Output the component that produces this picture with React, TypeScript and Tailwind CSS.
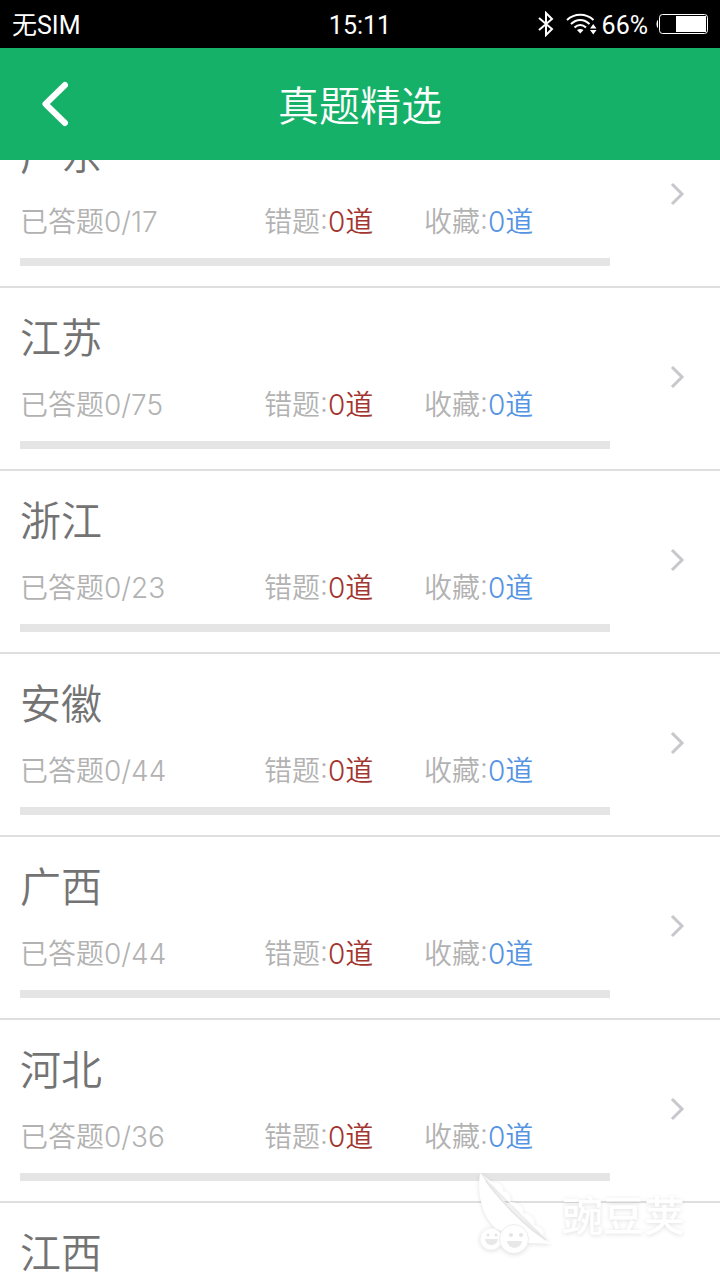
import React from "react";

interface Province {
  name: string;
  answered: number;
  total: number;
  wrong: number;
  saved: number;
}

const provinces: Province[] = [
  { name: "广东", answered: 0, total: 17, wrong: 0, saved: 0 },
  { name: "江苏", answered: 0, total: 75, wrong: 0, saved: 0 },
  { name: "浙江", answered: 0, total: 23, wrong: 0, saved: 0 },
  { name: "安徽", answered: 0, total: 44, wrong: 0, saved: 0 },
  { name: "广西", answered: 0, total: 44, wrong: 0, saved: 0 },
  { name: "河北", answered: 0, total: 36, wrong: 0, saved: 0 },
  { name: "江西", answered: 0, total: 40, wrong: 0, saved: 0 },
];

const StatusBar: React.FC = () => (
  <div className="grid h-12 shrink-0 grid-cols-3 items-center bg-black px-3 pt-1 font-[Roboto,'Noto_Sans_CJK_SC',sans-serif] text-[25px] leading-10 text-white">
    <span>无SIM</span>
    <span className="text-center">15:11</span>
    <div className="flex items-center justify-end">
      {/* Bluetooth */}
      <svg className="mr-3 mb-1 h-[26px] w-4" viewBox="0 0 16 26" fill="none" stroke="currentColor" strokeWidth="2">
        <path d="M1 7 14 18 8 24V2L14 8 1 19" />
      </svg>
      {/* Wifi */}
      <svg className="mr-1 mb-1 h-6 w-8" viewBox="0 0 32 24" fill="none" stroke="currentColor" strokeWidth="2">
        <path d="M1 8C8.500 1 20 1 27.500 8" />
        <path d="M5 12C10.500 6.500 18 6.500 23.500 12" />
        <path d="M8.500 15.500C12 12 16.500 12 20 15.500" />
        <path d="M11 18C13 16.500 15.500 16.500 17.500 18L14.250 21.500Z" fill="currentColor" stroke="none" />
        <path d="M24 16.500 27.250 12 30.500 16.500ZM24 18 27.250 22.500 30.500 18Z" fill="currentColor" stroke="none" />
      </svg>
      <span>66%</span>
      {/* Battery */}
      <svg className="mb-1 ml-2 h-5 w-[52px]" viewBox="0 0 52 20" fill="none">
        <path d="M2 6C0 7 0 13 2 14Z" fill="currentColor" />
        <rect x="3.500" y="0.500" width="48" height="19" rx="3" stroke="currentColor" />
        <rect x="20" y="2" width="30" height="16" fill="currentColor" />
      </svg>
    </div>
  </div>
);

const Header: React.FC = () => (
  <header className="grid h-28 shrink-0 grid-cols-[112px_1fr_112px] items-center bg-[#16b168] text-white">
    <button type="button" aria-label="返回" className="flex h-full items-center justify-center">
      <svg className="h-12 w-8" viewBox="0 0 32 48" fill="none" stroke="currentColor" strokeWidth="6" strokeLinecap="round" strokeLinejoin="round">
        <path d="M25 5 5.500 24 25 43" />
      </svg>
    </button>
    <h1 className="pt-1 text-center text-[41px] leading-[58px] font-[350]">真题精选</h1>
  </header>
);

const ProvinceRow: React.FC<{ item: Province }> = ({ item }) => (
  <li className="border-b-2 border-[#dfdfdf]">
    <a href="#" className="flex items-center pt-[21px] pb-5 pl-5">
      <div className="flex-1">
        <h2 className="text-[41px] leading-[58px] font-[350] text-[#737373]">{item.name}</h2>
        <div className="mt-[18px] grid grid-cols-[244fr_160fr_186fr] text-[28px] leading-10 font-[350] text-[#b2b2b2]">
          <span>
            已答题<span className="font-light">{item.answered}/{item.total}</span>
          </span>
          <span>
            错题:<span className="text-[#a33530]">{item.wrong}道</span>
          </span>
          <span>
            收藏:<span className="text-[#5594e2]">{item.saved}道</span>
          </span>
        </div>
        <div className="mt-4 h-2 bg-[#e5e5e5]">
          <div className="h-full bg-[#16b168]" style={{ width: `${(item.answered / item.total) * 100}%` }} />
        </div>
      </div>
      <div className="flex w-[110px] justify-end pr-8 pb-1">
        <svg className="h-6 w-5" viewBox="0 0 20 24" fill="none" stroke="#c7c7cc" strokeWidth="3">
          <path d="M4 2 14 12 4 22" />
        </svg>
      </div>
    </a>
  </li>
);

// Pea pod mark with its name, floating over the list
const Watermark: React.FC = () => (
  <div className="pointer-events-none absolute right-[35px] bottom-6 flex items-center gap-2 text-white drop-shadow-[0_1px_2px_rgba(0,0,0,0.12)]">
    <svg className="h-[84px] w-[76px]" viewBox="0 0 76 84">
      <path d="M2 1C-1 20 3 42 17 56L51 71L73 72C56 60 28 34 2 1Z" fill="currentColor" />
      <path
        d="M2 1 15 11C22 10 26 14 25 19C31 20 34 25 32 30C40 30 46 35 45 41C53 42 58 47 56 53C62 54 67 58 65 63L73 72Z"
        fill="currentColor"
      />
      <path d="M8 9C26 33 48 54 68 68" stroke="#e6e6e6" strokeWidth="2" fill="none" />
      <circle cx="13" cy="67" r="11" fill="currentColor" stroke="#f2f2f2" />
      <circle cx="36" cy="67" r="14.500" fill="currentColor" stroke="#ededed" />
      <path d="M7 67H20C19 75 8 75 7 67ZM29 69H44C43 78 30 78 29 69Z" fill="#e8e8e8" />
      <g fill="#e4e4e4">
        <circle cx="10" cy="63" r="1.500" />
        <circle cx="18" cy="63" r="1.500" />
        <circle cx="33" cy="63" r="2" />
        <circle cx="43" cy="63" r="2" />
      </g>
    </svg>
    <span className="pt-1 text-[41px] leading-[52px] font-medium">豌豆荚</span>
  </div>
);

const App: React.FC = () => {
  return (
    <div className="relative flex h-screen flex-col overflow-hidden bg-white font-[Inter,'Noto_Sans_CJK_SC',sans-serif]">
      <StatusBar />
      <Header />
      <main className="min-h-0 flex-1 overflow-hidden">
        {/* The list is scrolled partway into its first row */}
        <ul className="-mt-[55px]">
          {provinces.map((item) => (
            <ProvinceRow key={item.name} item={item} />
          ))}
        </ul>
      </main>
      <Watermark />
    </div>
  );
};

export default App;
